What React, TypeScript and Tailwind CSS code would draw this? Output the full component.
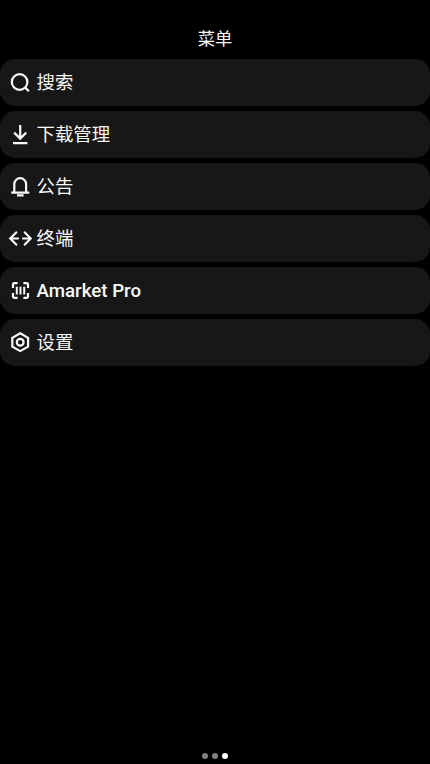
import type { ReactNode } from "react";
import clsx from "clsx";

const Icon = ({ children }: { children: ReactNode }) => (
  <svg
    viewBox="0 0 24 25"
    className="w-6 h-[25px] shrink-0"
    fill="none"
    stroke="currentColor"
    strokeWidth={2.2}
    aria-hidden="true"
  >
    {children}
  </svg>
);

const SearchIcon = () => (
  <Icon>
    <circle cx="11.6" cy="12" r="7.8" />
    <path d="M17 17.4l3.9 3.8" />
  </Icon>
);

const DownloadIcon = () => (
  <Icon>
    <path d="M12.2 3v13.2M6.2 10.6l6 6 6-6M5 21.2h14.4" />
  </Icon>
);

const BellIcon = () => (
  <Icon>
    <path d="M6.3 18.6v-8.5a5.9 5.9 0 0 1 11.8 0v8.5M3.2 18.6h18.1M9 21.4h6.6" />
  </Icon>
);

const TerminalIcon = () => (
  <Icon>
    <path
      strokeLinecap="round"
      d="M8.2 6.4L2.2 12.5l6 6.1M2.6 12.5h7.4M16.8 6.4l6 6.1-6 6.1M22.4 12.5H15"
    />
  </Icon>
);

const ScanIcon = () => (
  <Icon>
    <path d="M9.6 5.2H6.2A1.2 1.2 0 0 0 5 6.4V10M15.4 5.2h3.4A1.2 1.2 0 0 1 20 6.4V10M9.6 19.8H6.2A1.2 1.2 0 0 1 5 18.6V15M15.4 19.8h3.4a1.2 1.2 0 0 0 1.2-1.2V15" />
    <path strokeWidth={2} d="M8.8 8.7v7.8M12.5 8.7v7.8M16.2 8.7v7.8" />
  </Icon>
);

const SettingsIcon = () => (
  <Icon>
    <path d="M12.2 3.3l7.9 4.5v8.8l-7.9 4.5-7.9-4.5V7.8z" />
    <circle cx="12.2" cy="12.2" r="3.4" />
  </Icon>
);

const MENU_ITEMS = [
  { id: "search", title: "搜索", icon: <SearchIcon /> },
  { id: "downloads", title: "下载管理", icon: <DownloadIcon /> },
  { id: "notices", title: "公告", icon: <BellIcon /> },
  { id: "terminal", title: "终端", icon: <TerminalIcon /> },
  { id: "pro", title: "Amarket Pro", icon: <ScanIcon />, bold: true },
  { id: "settings", title: "设置", icon: <SettingsIcon /> },
];

const PAGE_COUNT = 3;
const ACTIVE_PAGE = 2;

export default function App() {
  return (
    <div className="flex h-screen w-full flex-col bg-black font-[Roboto,'Noto_Sans_CJK_SC',sans-serif] text-[#f9f9f9]">
      <h1 className="pt-[27px] h-[59px] text-center text-[17.3px] leading-[25px]">
        菜单
      </h1>

      <nav className="flex flex-col gap-[5px]">
        {MENU_ITEMS.map((item) => (
          <button
            key={item.id}
            type="button"
            className="flex h-[47px] w-full items-center gap-[4.5px] rounded-[15px] bg-[#171717] pl-2 text-left"
          >
            {item.icon}
            <span
              className={clsx(
                "leading-6",
                item.bold ? "text-[18.7px] font-medium" : "text-[18.4px]"
              )}
            >
              {item.title}
            </span>
          </button>
        ))}
      </nav>

      {/* Page indicator */}
      <div className="mt-auto flex justify-center gap-1 pb-[5px]">
        {Array.from({ length: PAGE_COUNT }, (_, i) => (
          <span
            key={i}
            className={clsx(
              "size-1.5 rounded-full",
              i === ACTIVE_PAGE ? "bg-white" : "bg-[#808080]"
            )}
          />
        ))}
      </div>
    </div>
  );
}
